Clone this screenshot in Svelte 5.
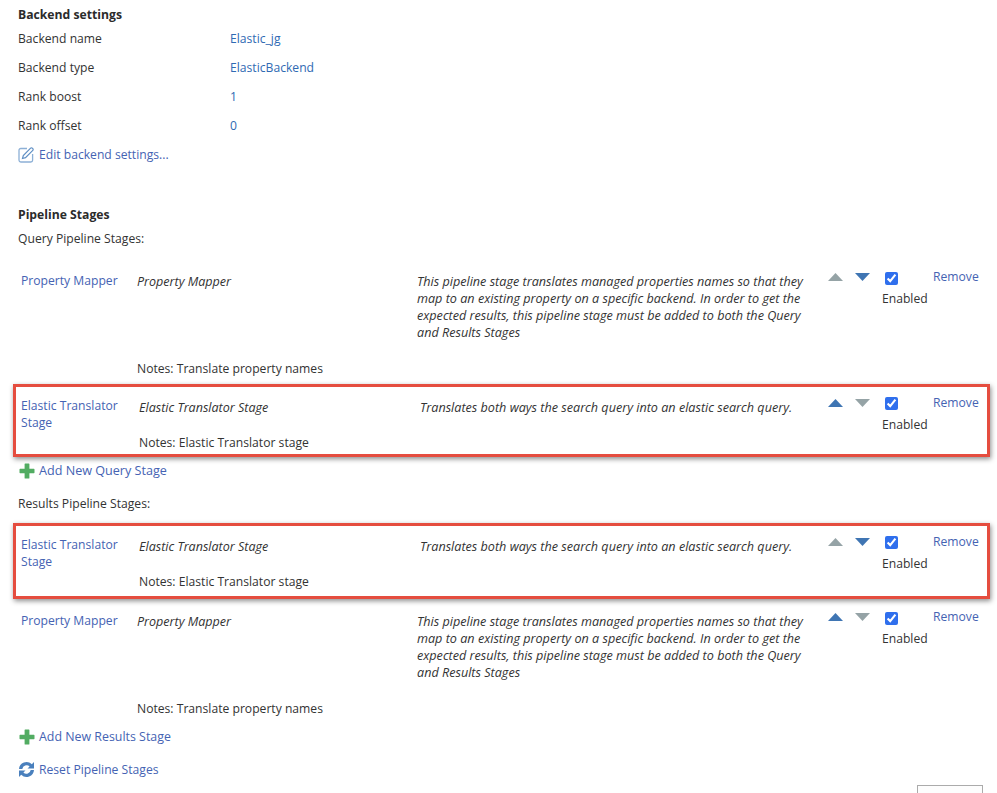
<script>
	const settings = [
		{ label: 'Backend name', value: 'Elastic_jg' },
		{ label: 'Backend type', value: 'ElasticBackend' },
		{ label: 'Rank boost', value: '1' },
		{ label: 'Rank offset', value: '0' }
	];

	const longDesc =
		'This pipeline stage translates managed properties names so that they map to an existing property on a specific backend. In order to get the expected results, this pipeline stage must be added to both the Query and Results Stages';
	const shortDesc = 'Translates both ways the search query into an elastic search query.';

	const mapper = {
		name: 'Property Mapper',
		title: 'Property Mapper',
		desc: longDesc,
		notes: 'Notes: Translate property names'
	};
	const translator = {
		name: 'Elastic Translator Stage',
		title: 'Elastic Translator Stage',
		desc: shortDesc,
		notes: 'Notes: Elastic Translator stage',
		boxed: true
	};

	const queryStages = [
		{ ...mapper, up: false, down: true, cls: 'first' },
		{ ...translator, up: true, down: false, cls: 'q2' }
	];
	const resultStages = [
		{ ...translator, up: false, down: true, cls: 'r1' },
		{ ...mapper, up: true, down: false, cls: 'r2' }
	];
</script>

{#snippet stage(s)}
	<div class="stage {s.cls}" class:boxed={s.boxed}>
		<a class="name" href="#top">{s.name}</a>
		<em class="title">{s.title}</em>
		<em class="desc">{s.desc}</em>
		<div class="arrows">
			<svg width="15" height="8" viewBox="0 0 15 8"><path d="M7.5 0L15 8H0z" fill={s.up ? '#3f75b3' : '#95a3a6'} /></svg>
			<svg width="15" height="8" viewBox="0 0 15 8"><path d="M0 0H15L7.5 8z" fill={s.down ? '#3f75b3' : '#95a3a6'} /></svg>
		</div>
		<label class="enabled">
			<input type="checkbox" checked />
			<span>Enabled</span>
		</label>
		<a class="remove" href="#top">Remove</a>
		<div class="notes">{s.notes}</div>
	</div>
{/snippet}

{#snippet plus()}
	<svg class="icon plus" width="16" height="16" viewBox="0 0 16 16">
		<path d="M6.2.5h3.6a.6.6 0 0 1 .6.6v4.7h4.5a.6.6 0 0 1 .6.6v3.2a.6.6 0 0 1-.6.6h-4.5v4.7a.6.6 0 0 1-.6.6H6.2a.6.6 0 0 1-.6-.6v-4.7H1.1a.6.6 0 0 1-.6-.6V6.4a.6.6 0 0 1 .6-.6h4.5V1.1a.6.6 0 0 1 .6-.6z" fill="#52ac62" />
	</svg>
{/snippet}

<main>
	<h2>Backend settings</h2>
	<div class="settings">
		{#each settings as row}
			<span>{row.label}</span>
			<span class="value">{row.value}</span>
		{/each}
	</div>
	<a class="action edit" href="#top">
		<svg class="icon" width="17" height="17" viewBox="0 0 17 17" fill="none">
			<path d="M9 2.5H2.8A1.8 1.8 0 0 0 1 4.3v10A1.8 1.8 0 0 0 2.8 16h10a1.8 1.8 0 0 0 1.8-1.8V8" stroke="#8db0d6" stroke-width="1.3" />
			<path d="M4.5 12.5l.8-3L12.6 2.2a1.2 1.2 0 0 1 1.7 0l.5.5a1.2 1.2 0 0 1 0 1.7L7.5 11.7z" stroke="#5f8fc4" stroke-width="1.2" />
		</svg>
		Edit backend settings...
	</a>

	<h2 class="pipeline">Pipeline Stages</h2>
	<div class="caption">Query Pipeline Stages:</div>
	{#each queryStages as s}
		{@render stage(s)}
	{/each}
	<a class="action add-query" href="#top">{@render plus()}Add New Query Stage</a>

	<div class="caption results">Results Pipeline Stages:</div>
	{#each resultStages as s}
		{@render stage(s)}
	{/each}
	<a class="action add-results" href="#top">{@render plus()}Add New Results Stage</a>
	<a class="action reset" href="#top">
		<svg class="icon" width="17" height="17" viewBox="0 0 17 17" fill="#4a80bd">
			<path d="M1 8A7.5 7.5 0 0 1 13.8 3.2L16 1V7.5H9.5L11.6 5.4A4.4 4.4 0 0 0 4.3 8z" />
			<path d="M16 9A7.5 7.5 0 0 1 3.2 13.8L1 16V9.5H7.5L5.4 11.6A4.4 4.4 0 0 0 12.7 9z" />
		</svg>
		Reset Pipeline Stages
	</a>
	<div class="footer"><button type="button" aria-label="Close"></button></div>
</main>

<style>
	:global(body) {
		background: #fff;
		overflow: hidden;
	}
	main {
		height: 793px;
		overflow: hidden;
		padding-top: 6px;
		box-sizing: border-box;
		font-family: 'Open Sans', 'Liberation Sans', sans-serif;
		font-size: 12.15px;
		line-height: 17px;
		color: #333;
		position: relative;
	}
	a {
		color: #4563b3;
		text-decoration: none;
	}
	em {
		font-size: 12.55px;
	}
	h2 {
		margin: 0 0 0 18px;
		font-size: 12.2px;
		line-height: 17px;
		font-weight: 700;
		color: #2b2b2b;
	}
	.settings {
		display: grid;
		grid-template-columns: 212px auto;
		grid-auto-rows: 29px;
		margin: 5px 0 0 18px;
		align-items: start;
		padding-top: 2px;
	}
	.value {
		color: #2f6ab3;
	}
	.action {
		display: flex;
		align-items: center;
		gap: 4px;
		margin-left: 18px;
		height: 17px;
	}
	.icon {
		flex: none;
	}
	.plus {
		margin-left: 1px;
	}
	.pipeline {
		margin-top: 43px;
	}
	.caption {
		margin: 7px 0 0 18px;
	}
	.results {
		margin-top: 16px;
	}
	.stage {
		display: grid;
		grid-template-columns: 116px 280px 411px 54px 51px 50px;
		grid-template-rows: auto auto;
		align-content: start;
		box-sizing: border-box;
		width: 977px;
		margin-left: 13px;
		padding-left: 8px;
		border: 3px solid transparent;
		border-left-width: 0;
		border-right-width: 0;
	}
	.boxed {
		border: 3px solid #e54d3f;
		padding-left: 5px;
		grid-template-columns: 118px 281px 408px 54px 51px 50px;
		box-shadow: 1px 2px 5px rgba(0, 0, 0, 0.45);
	}
	.first {
		margin-top: 22px;
	}
	.q2 {
		margin-top: 4px;
		height: 73px;
		padding-top: 10px;
	}
	.add-query {
		margin-top: 5px;
		font-size: 12.6px;
	}
	.r1 {
		margin-top: 11px;
		height: 76px;
		padding-top: 10px;
	}
	.r2 {
		margin-top: 10px;
	}
	.add-results {
		margin-top: 8px;
		font-size: 12.4px;
	}
	.reset {
		margin-top: 16px;
	}
	.name {
		grid-area: 1 / 1;
		padding-right: 10px;
	}
	.title {
		grid-area: 1 / 2;
		padding-top: 1px;
	}
	.desc {
		grid-area: 1 / 3;
		padding-top: 1px;
		width: 392px;
		font-size: 12.62px;
	}
	.boxed .title,
	.boxed .desc {
		padding-top: 2px;
	}
	.boxed .desc {
		width: 400px;
	}
	.arrows {
		grid-area: 1 / 4;
		display: flex;
		gap: 12px;
		align-items: flex-start;
	}
	.arrows svg {
		margin-top: 1px;
		flex: none;
	}
	.boxed .arrows {
		padding-top: 1px;
	}
	.enabled {
		grid-area: 1 / 5;
		display: flex;
		flex-direction: column;
		align-items: flex-start;
	}
	.enabled input {
		margin: 0 0 5px 3px;
		width: 13px;
		height: 13px;
		accent-color: #2f6fed;
	}
	.boxed .enabled input {
		margin-bottom: 6px;
	}
	.remove {
		grid-area: 1 / 6;
		margin-top: -4px;
	}
	.boxed .remove {
		margin-top: -3px;
	}
	.notes {
		grid-area: 2 / 2 / 2 / 4;
		padding-top: 19px;
	}
	.boxed .notes {
		padding-top: 1px;
	}
	.footer {
		position: absolute;
		left: 917px;
		top: 785px;
	}
	.footer button {
		display: block;
		width: 66px;
		height: 30px;
		background: #fdfdfd;
		border: 1px solid #ababab;
		padding: 0;
	}
</style>
